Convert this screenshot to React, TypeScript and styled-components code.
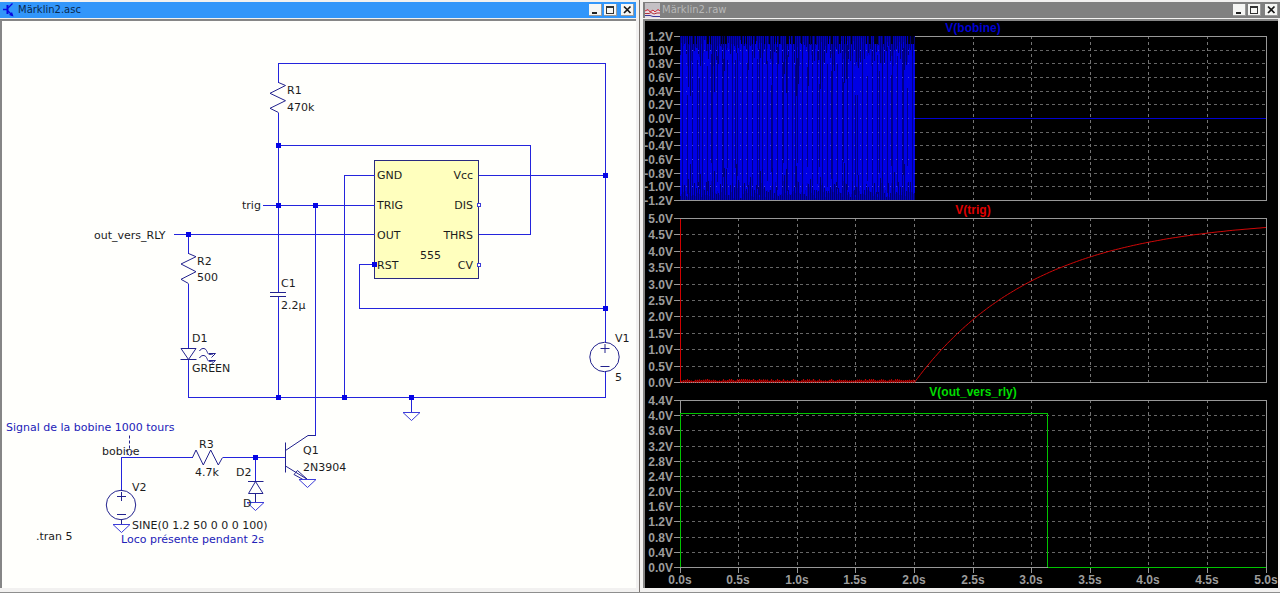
import React from "react";
import styled, { createGlobalStyle } from "styled-components";

const GlobalStyle = createGlobalStyle`
  * { box-sizing: border-box; }
  body {
    margin: 0;
    background: #f0f0f0;
    font-family: "DejaVu Sans", sans-serif;
  }
`;

const Desktop = styled.main`
  display: grid;
  grid-template-columns: 1fr 1fr;
  border-bottom: 1px solid #8e8e8e;
  background: #f2f1f0;
`;

const WindowFrame = styled.section<{ $side: "left" | "right" }>`
  display: flex;
  flex-direction: column;
  min-width: 0;
  padding-top: 2px;
  padding-bottom: 4px;
  padding-right: ${(p) => (p.$side === "left" ? "3px" : "0")};
  padding-left: ${(p) => (p.$side === "left" ? "0" : "3px")};
  border-right: ${(p) => (p.$side === "left" ? "1px solid #7a7470" : "0")};
`;

const TitleBar = styled.header<{ $active?: boolean }>`
  display: flex;
  align-items: center;
  gap: 2px;
  height: 16px;
  margin-bottom: 1px;
  padding: 0 2px;
  background: ${(p) => (p.$active ? "#3296fa" : "#808080")};
  color: ${(p) => (p.$active ? "#0a2a50" : "#b8b8b8")};
`;

const Title = styled.h1`
  flex: 1;
  margin: 0;
  font-size: 10px;
  line-height: 16px;
  font-weight: 400;
`;

const Controls = styled.div`
  display: flex;
  gap: 2px;
`;

const ControlButton = styled.button`
  display: flex;
  width: 13px;
  height: 12px;
  padding: 0;
  border: 0;
  border-right: 1px solid #9a9a9a;
  border-bottom: 1px solid #9a9a9a;
  background: #f6f6f4;

  &:last-child {
    margin-left: 2px;
  }
`;

const Client = styled.div<{ $dark?: boolean }>`
  flex: 1;
  border-top: 2px solid #868686;
  border-left: 2px solid #868686;
  margin-right: ${(p) => (p.$dark ? "2px" : "0")};
  background: ${(p) => (p.$dark ? "#000" : "#fffffc")};
`;

const Drawing = styled.svg`
  display: block;
  width: 100%;
  height: auto;
  overflow: visible;
`;

const Label = styled.text<{ $note?: boolean }>`
  font-family: "DejaVu Sans", sans-serif;
  font-size: 11px;
  fill: ${(p) => (p.$note ? "#2222b8" : "#1c1c1c")};
`;

const AxisLabel = styled.text`
  font-family: "Liberation Sans", sans-serif;
  font-size: 12px;
  font-weight: 700;
  fill: #9c9c9c;
`;

const TraceTitle = styled.text`
  font-family: "Liberation Sans", sans-serif;
  font-size: 12px;
  font-weight: 700;
  text-anchor: middle;
`;

function WindowControls() {
  return (
    <Controls>
      <ControlButton type="button" aria-label="Minimize">
        <svg width="12" height="11"><path d="M3 9h5" stroke="#222" strokeWidth="2" /></svg>
      </ControlButton>
      <ControlButton type="button" aria-label="Maximize">
        <svg width="12" height="11" shapeRendering="crispEdges">
          <path d="M2 2h8v2h-8zM2 4h1v6h-1zM9 4h1v6h-1zM3 9h6v1h-6z" fill="#333" />
        </svg>
      </ControlButton>
      <ControlButton type="button" aria-label="Close">
        <svg width="12" height="11"><path d="M3 2.5L9.500 9M9.500 2.500L3 9" stroke="#181818" strokeWidth="1.700" /></svg>
      </ControlButton>
    </Controls>
  );
}

/* ---------- schematic ---------- */

const WIRES = [
  "M278.500 82.500V63.500H605.500V342.500",
  "M278.500 112.500V291.500",
  "M278.500 296.500V397.500",
  "M278.500 145.500H530.500V234.500H478.500",
  "M262.500 205.500H374.500",
  "M173.500 234.500H374.500",
  "M374.500 175.500H344.500V397.500",
  "M478.500 175.500H605.500",
  "M374.500 264.500H359.500V308.500H605.500",
  "M315.500 205.500V435.500",
  "M188.500 234.500V253.500",
  "M188.500 283.500V348.500",
  "M188.500 359.500V397.500H605.500V371.500",
  "M411.500 397.500V412.500",
  "M121.500 490.500V457.500H192.500",
  "M222.500 457.500H285.500",
  "M255.500 457.500V481.500",
];

const NODES = [
  [278, 145], [278, 205], [315, 205], [188, 234], [374, 264], [605, 175],
  [605, 308], [278, 397], [344, 397], [411, 397], [255, 457],
];

const GROUNDS = [[411.5, 412.5], [307.5, 479.5], [255.5, 502.5], [121.5, 524.5]];

const LABELS: [number, number, string][] = [
  [287, 94, "R1"], [287, 111, "470k"], [242, 209, "trig"], [94, 239, "out_vers_RLY"],
  [377, 179, "GND"], [377, 209, "TRIG"], [377, 239, "OUT"], [377, 269, "RST"], [420, 259, "555"],
  [197, 265, "R2"], [197, 281, "500"], [281, 287, "C1"], [281, 309, "2.2µ"],
  [192, 342, "D1"], [192, 372, "GREEN"], [615, 342, "V1"], [615, 381, "5"],
  [102, 455, "bobine"], [199, 448, "R3"], [195, 476, "4.7k"], [236, 476, "D2"], [243, 507, "D"],
  [303, 454, "Q1"], [303, 471, "2N3904"], [132, 491, "V2"],
  [132, 529, "SINE(0 1.2 50 0 0 0 100)"], [36, 540, ".tran 5"],
];

const RIGHT_PINS: [number, string][] = [[179, "Vcc"], [209, "DIS"], [239, "THRS"], [269, "CV"]];

function Source({ x, y }: { x: number; y: number }) {
  return (
    <g>
      <circle cx={x} cy={y} r="14.700" />
      <path d={`M${x - 4} ${y - 8.5}h9M${x + 0.5} ${y - 13}v9M${x - 4} ${y + 9.5}h9`} />
    </g>
  );
}

function Schematic() {
  return (
    <Drawing viewBox="2 21 634 567" role="img" aria-label="555 timer circuit">
      <rect x="374.500" y="160.500" width="104" height="118" fill="#ffffbe" stroke="#2a2a80" />
      <path d={WIRES.join("")} fill="none" stroke="#2424dc" shapeRendering="crispEdges" />
      <g fill="none" stroke="#22228e">
        <path d="M278.500 82.500L285.500 85.500L270 93.300L285.500 100.700L270 108.300L278.500 112.500" />
        <path d="M188.500 253.500L196 256.700L181 264L196 271.700L181 279.300L188.500 283.500" />
        <path d="M192.500 457.500L196 450L203.300 465L210.700 450L218.300 465L222.500 457.500" />
        <path d="M270 292.500H286M270 296.500H286" />
        <path d="M181 348.500H196L188.500 359.500ZM180.500 359.500H196.500" />
        <path d="M199.500 351C201 348 205 347.500 206.500 350.500S208 355.500 213 354M209 353.500H215.500L211.500 357.500" />
        <path d="M199.500 358C201 355 205 354.500 206.500 357.500S208 362.500 213 361M209 360.500H215.500L211.500 364" />
        <path d="M285.500 442.500V472.500M285.500 450.500L308 435.500H315.500M285.500 466L307.500 479.500M297.500 470.500L294 474.500L303 479.500L307.500 479.500Z" />
        <path d="M248 481.500H263.500M255.500 481.500L263 493.500H248.500ZM255.500 493.500V502.500M121.500 519.500V524.500" />
        <path d="M129.500 435.500V450" strokeDasharray="3 2" />
        <path d="M126 450L129.500 456.500L133 450" strokeDasharray="2 2" />
        <Source x={604.5} y={357} />
        <Source x={121} y={505} />
      </g>
      <g fill="#fffffc" stroke="#3c3cd8">
        {GROUNDS.map(([x, y]) => (
          <path key={x} d={`M${x - 8.500} ${y}h17l-8.500 8z`} fill="none" />
        ))}
        <rect x="477.500" y="203.500" width="3" height="3" />
        <rect x="477.500" y="263.500" width="3" height="3" />
      </g>
      {NODES.map(([x, y]) => (
        <rect key={`${x}-${y}`} x={x - 2} y={y - 2} width="5" height="5" fill="#0505e6" />
      ))}
      {LABELS.map(([x, y, text]) => (
        <Label key={`${text}-${x}`} x={x} y={y}>{text}</Label>
      ))}
      {RIGHT_PINS.map(([y, text]) => (
        <Label key={text} x="473" y={y} textAnchor="end">{text}</Label>
      ))}
      <Label $note x="6" y="431">Signal de la bobine 1000 tours</Label>
      <Label $note x="121" y="543">Loco présente pendant 2s</Label>
    </Drawing>
  );
}

/* ---------- waveform viewer ---------- */

const LEFT = 35;
const RIGHT = 621;
const TOP = 15;
const T_MAX = 5;
const timeX = (t: number) => LEFT + (t / T_MAX) * (RIGHT - LEFT);

/** Repeatable pseudo-random value in 0..1 used for the sampled look of dense traces. */
const noise = (n: number) => {
  const v = Math.sin(n * 12.9898) * 43758.5453;
  return v - Math.floor(v);
};

type PlotProps = {
  title: string;
  color: string;
  ticks: string[];
  plotHeight: number;
  height: number;
  timeAxis?: boolean;
  children: React.ReactNode;
};

function Plot({ title, color, ticks, plotHeight, height, timeAxis, children }: PlotProps) {
  const bottom = TOP + plotHeight;
  const tickY = (i: number) => Math.round(TOP + (i / (ticks.length - 1)) * plotHeight) + 0.5;
  const times = Array.from({ length: 11 }, (_, i) => i / 2);
  const gridX = (t: number) => Math.floor(timeX(t)) + 0.5;
  return (
    <Drawing viewBox={`0 0 633 ${height}`} role="img" aria-label={title}>
      <g fill="none" shapeRendering="crispEdges">
        <g stroke="#666" strokeDasharray="3 3">
          {ticks.slice(1, -1).map((t, i) => <path key={t} d={`M${LEFT} ${tickY(i + 1)}H${RIGHT}`} />)}
          {times.slice(1, -1).map((t) => <path key={t} d={`M${gridX(t)} ${TOP}V${bottom}`} stroke="#747474" />)}
        </g>
        <rect x={LEFT + 0.5} y={TOP + 0.5} width={RIGHT - LEFT} height={plotHeight} stroke="#989898" />
        {ticks.map((t, i) => <path key={t} d={`M${LEFT - 6} ${tickY(i)}H${LEFT}`} stroke="#989898" />)}
        {timeAxis && times.map((t) => <path key={t} d={`M${gridX(t)} ${bottom}v6`} stroke="#989898" />)}
      </g>
      {children}
      <TraceTitle x="328" y="11" fill={color}>{title}</TraceTitle>
      {ticks.map((t, i) => (
        <AxisLabel key={t} x="28" y={Math.floor(tickY(i)) + 5} textAnchor="end">{t}</AxisLabel>
      ))}
      {timeAxis && times.map((t) => (
        <AxisLabel key={t} x={Math.floor(timeX(t))} y={bottom + 17} textAnchor="middle">{`${t.toFixed(1)}s`}</AxisLabel>
      ))}
    </Drawing>
  );
}

const ticksFrom = (max: number, step: number, count: number) =>
  Array.from({ length: count }, (_, i) => {
    const v = max - i * step;
    return `${(Math.abs(v) < 0.001 ? 0 : v).toFixed(1)}V`;
  });

function CoilTrace() {
  const columns = Array.from({ length: 235 }, (_, i) => i);
  return (
    <g shapeRendering="crispEdges">
      <rect x={LEFT} y={TOP} width="235" height="164" fill="#0000e4" />
      {columns.map((i) => {
        const x = LEFT + i + 0.5;
        const deep = i % 12 > 6 ? 1 : 0.5;
        const upper = Math.round((8 + noise(i + 3) * 52) * deep);
        const lower = Math.round((4 + noise(i + 91) * 34) * deep);
        const dark = i % 2 === 0;
        const gap = i % 5 === 2 || i % 12 === 7;
        return (
          <g key={i}>
            <path
              d={`M${x} ${TOP}v${dark ? upper : Math.round(upper / 2)}M${x} 179v-${dark ? lower : Math.round(lower / 2)}`}
              stroke={dark ? "#000074" : "#0000bc"}
            />
            {gap && <path d={`M${x} ${TOP + upper}V${179 - lower}`} stroke="#000088" />}
            {noise(i + 400) > 0.8 && <path d={`M${x} ${TOP}v8`} stroke="#00001c" />}
          </g>
        );
      })}
      <path
        d={Array.from({ length: 11 }, (_, i) => `M${LEFT} ${Math.round(TOP + ((i + 1) / 12) * 164) + 0.5}h235`).join("")}
        stroke="#4a4ae0"
        strokeDasharray="1 5"
      />
      <path d={`M270 97.500H${RIGHT}`} stroke="#0000d2" />
    </g>
  );
}

function TriggerTrace() {
  const y = (v: number) => 179.5 - (v / 5) * 164;
  const ripple = Array.from({ length: 235 }, (_, i) => `L${LEFT + 0.5 + i} ${i % 2 ? 176 + noise(i) * 2 : 179.5}`).join("");
  const charge = Array.from({ length: 118 }, (_, i) => {
    const t = 2 + (i / 117) * 3;
    return `L${timeX(t).toFixed(1)} ${y(5 * (1 - Math.exp(-(t - 2) / 1.034))).toFixed(1)}`;
  }).join("");
  return (
    <g fill="none">
      <path d={`M35.500 16V179.500${ripple}`} stroke="#d00000" />
      <path d={`M269.500 179.500${charge}`} stroke="#d00808" />
    </g>
  );
}

function OutputTrace() {
  return (
    <path
      d={`M35.500 182V28.500H402.500V181.500L404 182.500H${RIGHT}`}
      fill="none"
      stroke="#00c400"
      shapeRendering="crispEdges"
    />
  );
}

export default function App() {
  return (
    <>
      <GlobalStyle />
      <Desktop>
        <WindowFrame $side="left">
          <TitleBar $active>
            <svg width="14" height="16" fill="none" stroke="#0808e0" aria-hidden="true">
              <path d="M1 7.500H5" strokeWidth="1.500" />
              <path d="M5.500 3V12" strokeWidth="2" />
              <path d="M6 6L10.500 1.500M6 9L10 13" strokeWidth="1.300" />
              <path d="M11.500 14.500L7 13L10 10Z" fill="#0808e0" stroke="none" />
            </svg>
            <Title>Märklin2.asc</Title>
            <WindowControls />
          </TitleBar>
          <Client>
            <Schematic />
          </Client>
        </WindowFrame>
        <WindowFrame $side="right">
          <TitleBar>
            <svg width="15" height="15" fill="none" aria-hidden="true">
              <rect width="15" height="8" fill="#c4c0c4" />
              <rect y="8" width="15" height="7" fill="#e8dce4" />
              <path d="M0 8L3 6.500L5 9L8 7L10 9L13 6.500L15 8" stroke="#d42a3a" />
              <path d="M0 10.500H4L6 9.500L9 11L12 10H15" stroke="#b0303a" />
              <path d="M0 12.500H5L8 13.500H15" stroke="#3a3a98" />
            </svg>
            <Title>Märklin2.raw</Title>
            <WindowControls />
          </TitleBar>
          <Client $dark>
            <Plot title="V(bobine)" color="#0000d2" ticks={ticksFrom(1.2, 0.2, 13)} plotHeight={164} height={182}>
              <CoilTrace />
            </Plot>
            <Plot title="V(trig)" color="#e00000" ticks={ticksFrom(5, 0.5, 11)} plotHeight={164} height={182}>
              <TriggerTrace />
            </Plot>
            <Plot title="V(out_vers_rly)" color="#00dc00" ticks={ticksFrom(4.4, 0.4, 12)} plotHeight={167} height={203} timeAxis>
              <OutputTrace />
            </Plot>
          </Client>
        </WindowFrame>
      </Desktop>
    </>
  );
}
